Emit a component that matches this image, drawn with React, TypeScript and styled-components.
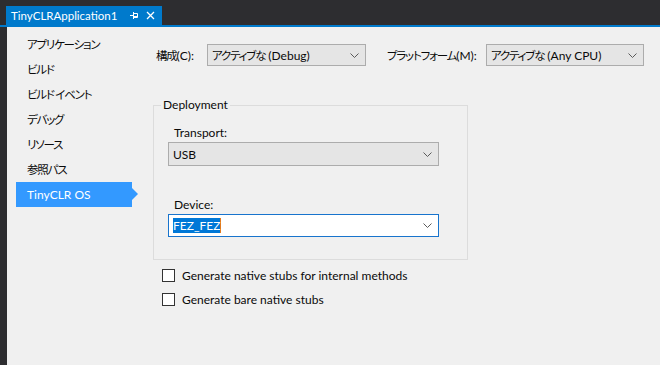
import React from 'react';
import styled, { createGlobalStyle } from 'styled-components';

const GlobalStyle = createGlobalStyle`
  html, body {
    margin: 0;
    padding: 0;
    background: #f0f0f0;
  }
  body {
    font-family: Lato, "Noto Sans CJK JP", sans-serif;
    font-size: 12px;
    color: #0a0a0a;
  }
`;

// kana in the reference are set in a condensed UI face
const Jp = styled.span`
  font-family: "Noto Sans CJK JP", sans-serif;
  font-size: 11.5px;
  font-feature-settings: "palt";
  letter-spacing: -1.2px;
`;

const navItems = [
  { jp: 'アプリケーション' },
  { jp: 'ビルド' },
  { jp: 'ビルド イベント' },
  { jp: 'デバッグ' },
  { jp: 'リソース' },
  { jp: '参照パス' },
  { en: 'TinyCLR OS' },
];

const Chevron = () => (
  <svg width="9" height="5" viewBox="0 0 9 5">
    <path d="M0.5 0.5 L4.5 4.5 L8.5 0.5" fill="none" stroke="#5a5a5a" strokeWidth="1" />
  </svg>
);

const PinIcon = () => (
  <svg width="9" height="9" viewBox="0 0 9 9">
    <path d="M0 4.5 H3 M3.5 1 V8" stroke="#fff" strokeWidth="1" fill="none" />
    <path d="M3.5 2.5 H7.5 V6.5 H3.5" stroke="#fff" strokeWidth="1" fill="none" />
    <path d="M3.5 5.5 H7.5" stroke="#fff" strokeWidth="1" />
  </svg>
);

const CloseIcon = () => (
  <svg width="9" height="9" viewBox="0 0 9 9">
    <path d="M1 1 L8 8 M8 1 L1 8" stroke="#fff" strokeWidth="1.3" fill="none" />
  </svg>
);

export default function App() {
  return (
    <Window>
      <GlobalStyle />
      <TitleBar>
        <Tab>
          <TabTitle>TinyCLRApplication1</TabTitle>
          <TabButton><PinIcon /></TabButton>
          <TabButton><CloseIcon /></TabButton>
        </Tab>
      </TitleBar>
      <Body>
        <Nav>
          {navItems.map((item, i) => (
            <NavItem key={i} $active={i === navItems.length - 1}>
              {item.jp ? <Jp>{item.jp}</Jp> : item.en}
            </NavItem>
          ))}
        </Nav>
        <Main>
          <ConfigRow>
            <Label $width={51}><Jp>構成</Jp>(C):</Label>
            <Combo $width={159}>
              <ComboText><Jp>アクティブな</Jp> (Debug)</ComboText>
              <Chevron />
            </Combo>
            <Label $width={99} $spaced><Jp>プラットフォーム</Jp>(M):</Label>
            <Combo $width={158}>
              <ComboText><Jp>アクティブな</Jp> (Any CPU)</ComboText>
              <Chevron />
            </Combo>
          </ConfigRow>

          <Group>
            <Legend>Deployment</Legend>
            <GroupBody>
              <GroupLabel>Transport:</GroupLabel>
              <Combo $width={271} $height={24}>
                <ComboText>USB</ComboText>
                <Chevron />
              </Combo>
              <GroupLabel $gap={31}>Device:</GroupLabel>
              <Combo $width={271} $height={23} $focused>
                <ComboText><Selected>FEZ_FEZ</Selected></ComboText>
                <Chevron />
              </Combo>
            </GroupBody>
          </Group>

          <CheckRow $first>
            <CheckBox />
            Generate native stubs for internal methods
          </CheckRow>
          <CheckRow>
            <CheckBox />
            Generate bare native stubs
          </CheckRow>
        </Main>
      </Body>
    </Window>
  );
}

const Window = styled.div`
  width: 660px;
  height: 365px;
  display: flex;
  flex-direction: column;
  overflow: hidden;
`;

const TitleBar = styled.div`
  height: 25px;
  background: #2d2d30;
  border-bottom: 2px solid #007acc;
  display: flex;
  align-items: flex-end;
  padding-left: 6px;
`;

const Tab = styled.div`
  width: 156px;
  height: 19px;
  box-sizing: border-box;
  background: #007acc;
  color: #ffffff;
  display: flex;
  align-items: center;
  padding: 0 6px 0 5px;
`;

const TabTitle = styled.span`
  flex: 1;
  font-size: 11.5px;
  line-height: 19px;
  white-space: nowrap;
`;

const TabButton = styled.span`
  width: 12px;
  height: 12px;
  display: flex;
  align-items: center;
  justify-content: center;
  margin-left: 4px;
`;

const Body = styled.div`
  flex: 1;
  display: flex;
  border-left: 7px solid #2d2d30;
  background: #f0f0f0;
`;

const Nav = styled.nav`
  width: 146px;
  flex-shrink: 0;
  padding-top: 5px;
  display: flex;
  flex-direction: column;
`;

const NavItem = styled.div<{ $active?: boolean }>`
  position: relative;
  width: 116px;
  height: 25px;
  line-height: 25px;
  margin-left: 9px;
  padding-left: 11px;
  box-sizing: border-box;
  white-space: nowrap;
  color: ${p => (p.$active ? '#ffffff' : '#0a0a0a')};
  background: ${p => (p.$active ? '#3399ff' : 'transparent')};

  &::after {
    content: '';
    display: ${p => (p.$active ? 'block' : 'none')};
    position: absolute;
    right: -6px;
    top: 6px;
    border-top: 6px solid transparent;
    border-bottom: 6px solid transparent;
    border-left: 6px solid #3399ff;
  }
`;

const Main = styled.div`
  flex: 1;
  padding-top: 17px;
  display: flex;
  flex-direction: column;
  align-items: flex-start;
`;

const ConfigRow = styled.div`
  display: flex;
  align-items: center;
  height: 22px;
  padding-left: 3px;
`;

const Label = styled.span<{ $width: number; $spaced?: boolean }>`
  width: ${p => p.$width}px;
  flex-shrink: 0;
  margin-left: ${p => (p.$spaced ? '21px' : '0')};
  white-space: nowrap;
`;

const Combo = styled.div<{ $width: number; $height?: number; $focused?: boolean }>`
  width: ${p => p.$width}px;
  height: ${p => p.$height ?? 22}px;
  box-sizing: border-box;
  display: flex;
  align-items: center;
  padding: 0 6px 0 4px;
  border: 1px solid ${p => (p.$focused ? '#1874cd' : '#acacac')};
  background: ${p => (p.$focused ? '#ffffff' : '#e5e5e5')};
`;

const ComboText = styled.span`
  flex: 1;
  white-space: nowrap;
  overflow: hidden;
`;

const Selected = styled.span`
  background: #0078d7;
  color: #ffffff;
  padding: 1px 0;
  border-right: 1px solid #e07a20;
`;

const Group = styled.fieldset`
  width: 314px;
  box-sizing: border-box;
  margin: 31px 0 0 0;
  padding: 0;
  border: 1px solid #dcdcdc;
`;

const Legend = styled.legend`
  margin-left: 7px;
  padding: 0 2px;
  line-height: 16px;
`;

const GroupBody = styled.div`
  padding: 12px 28px 22px 14px;
  display: flex;
  flex-direction: column;
`;

const GroupLabel = styled.div<{ $gap?: number }>`
  margin-top: ${p => p.$gap ?? 0}px;
  margin-bottom: 1px;
  padding-left: 6px;
  line-height: 16px;
`;

const CheckRow = styled.label<{ $first?: boolean }>`
  display: flex;
  align-items: center;
  height: 24px;
  margin-top: ${p => (p.$first ? '3px' : '0')};
  padding-left: 9px;
  white-space: nowrap;
`;

const CheckBox = styled.span`
  width: 13px;
  height: 13px;
  box-sizing: border-box;
  border: 1px solid #333333;
  background: #ffffff;
  margin-right: 7px;
  flex-shrink: 0;
`;
